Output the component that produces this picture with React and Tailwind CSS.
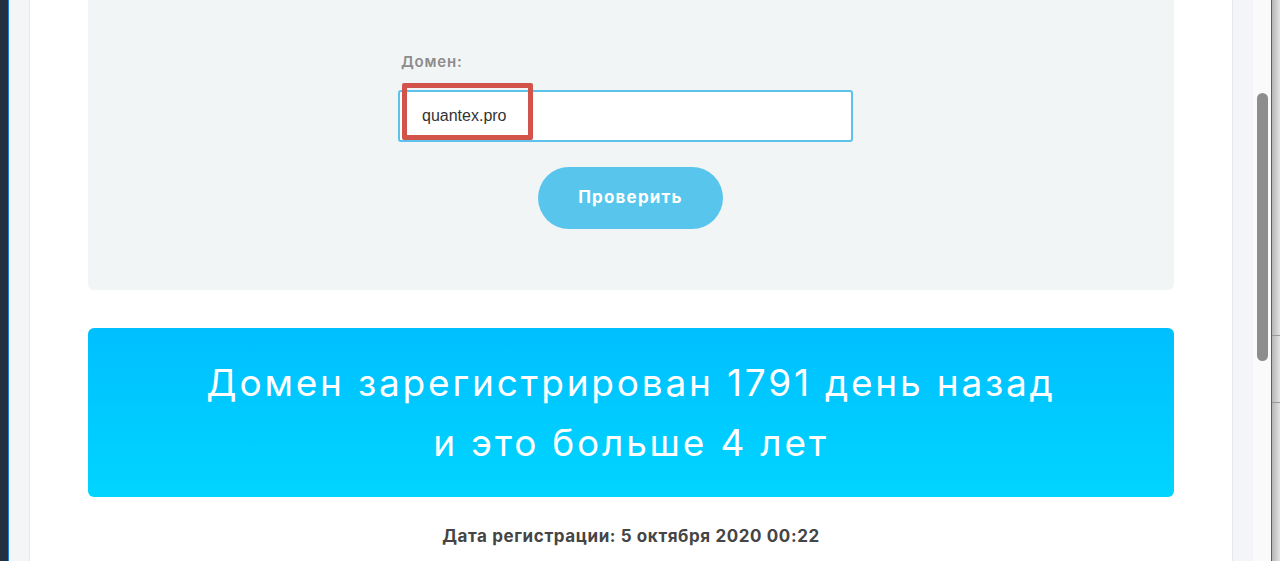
import React from "react";

const heading = { fontFamily: "Inter, 'Open Sans', sans-serif" };

const DomainForm = () => (
  <div className="h-[290px] rounded-b-md bg-[#f2f5f6] pt-[52px]">
    <div className="ml-[310px] w-[455px] flex flex-col">
      <label className="ml-[3px] text-[15px] font-semibold leading-[20px] tracking-[0.8px] text-[#8c8c8c]" style={heading}>
        Домен:
      </label>
      <div className="relative mt-[18px] h-[52px] rounded-[3px] border-2 border-[#5cc2ec] bg-white">
        <span
          className="absolute left-[22px] top-[13px] text-[16px] leading-[22px] text-[#333]"
          style={{ fontFamily: "'Liberation Sans', Arial, sans-serif" }}
        >
          quantex.pro
        </span>
        {/* red highlight from the screenshot */}
        <div className="absolute left-[2px] top-[-9px] h-[57px] w-[131px] rounded-[2px] border-[5px] border-[#d1534a]"></div>
      </div>
      <button
        type="button"
        className="mx-auto mt-[25px] h-[62px] w-[185px] translate-x-[5px] rounded-full bg-[#57c5ec] text-[17px] font-bold tracking-[1.2px] text-white"
        style={heading}
      >
        Проверить
      </button>
    </div>
  </div>
);

const ResultCard = () => (
  <div className="mt-[38px] flex h-[169px] flex-col items-center justify-center rounded-md bg-gradient-to-b from-[#00bfff] to-[#00d5ff] text-white">
    <p className="text-[37px] font-normal leading-[60px] tracking-[2.8px]" style={heading}>
      Домен зарегистрирован 1791 день назад
    </p>
    <p className="text-[37px] font-normal leading-[60px] tracking-[2.8px]" style={heading}>
      и это больше 4 лет
    </p>
  </div>
);

export default function App() {
  return (
    <div className="flex h-[561px] w-[1280px] overflow-hidden bg-white">
      <div className="w-[8px] bg-[#22303f]"></div>
      <div className="w-[1px] bg-[#1a80d6]"></div>
      <div className="w-[21px] border-r border-[#e6e8eb] bg-[#f4f5f7]"></div>
      <main className="flex-1 px-[58px]">
        <DomainForm />
        <ResultCard />
        <p className="mt-[27px] text-center text-[17px] font-bold tracking-[0.6px] text-[#454545]" style={heading}>
          Дата регистрации: 5 октября 2020 00:22
        </p>
      </main>
      <div className="w-[21px] border-l border-[#e6e8eb] bg-[#f4f5f8]"></div>
      <div className="relative w-[18px] bg-[#fafafa]">
        <div className="absolute left-[4px] top-[93px] h-[268px] w-[11px] rounded-full bg-[#8d8d8d]"></div>
      </div>
      <div className="w-[1px] bg-[#1a6fc2]"></div>
      <div className="flex w-[8px] flex-col bg-gradient-to-r from-[#b5b5b5] to-[#e3e3e3]">
        <div className="h-[335px]"></div>
        <div className="h-[1px] bg-[#9a9a9a]"></div>
        <div className="h-[66px]"></div>
        <div className="h-[1px] bg-[#9a9a9a]"></div>
      </div>
    </div>
  );
}
